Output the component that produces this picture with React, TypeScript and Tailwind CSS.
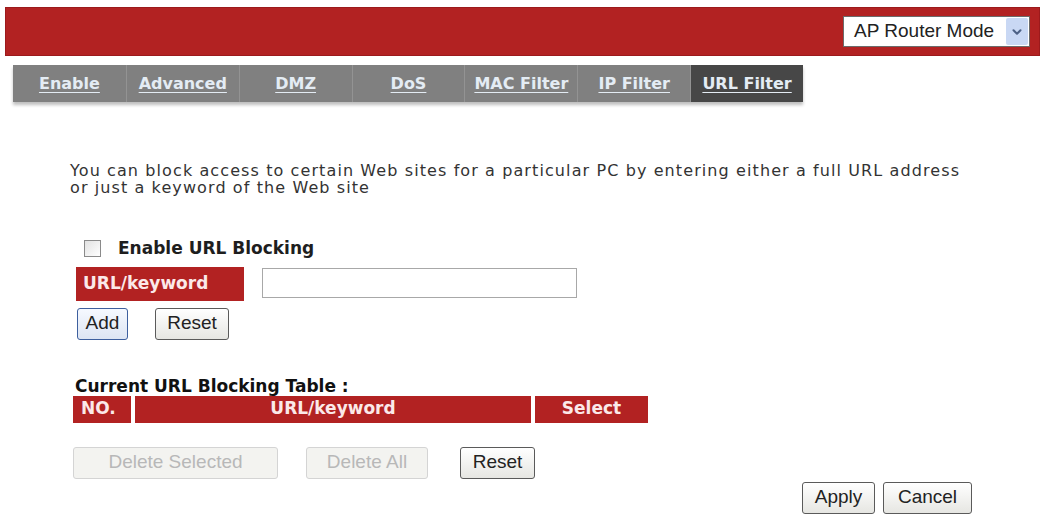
import { ChevronDown } from "lucide-react";

const TABS = ["Enable", "Advanced", "DMZ", "DoS", "MAC Filter", "IP Filter", "URL Filter"];

function Btn({
  label,
  className = "",
  disabled = false,
  focused = false,
}: {
  label: string;
  className?: string;
  disabled?: boolean;
  focused?: boolean;
}) {
  let look = "border-[#5a5a5a] bg-gradient-to-b from-white to-[#e6e6e2] text-[#222]";
  if (disabled) look = "border-[#d4d4d4] bg-[#f3f3f0] text-[#b8b8b8]";
  if (focused) look = "border-[#3d5f9e] bg-gradient-to-b from-[#f6f9ff] to-[#dde5f3] text-[#222]";
  return (
    <button
      type="button"
      disabled={disabled}
      className={
        "flex h-[32px] items-center justify-center rounded-[3px] border font-['Liberation_Sans',Arial,sans-serif] text-[19px] " +
        look +
        " " +
        className
      }
    >
      {label}
    </button>
  );
}

export default function App() {
  return (
    <div className="relative h-[518px] w-[1045px] overflow-hidden bg-white font-['DejaVu_Sans',Verdana,sans-serif] text-[#2b2b2b]">
      {/* top bar */}
      <div className="mx-[5px] mt-[7px] flex h-[49px] items-center justify-end border border-[#9c1a1c] bg-[#b22222] pr-[9px]">
        <div className="flex h-[31px] w-[187px] items-center border border-[#6b6b6b] bg-white pl-[10px] pr-[1px]">
          <span className="flex-1 font-['Liberation_Sans',Arial,sans-serif] text-[19px] text-[#222]">
            AP Router Mode
          </span>
          <span className="flex h-[27px] w-[22px] items-center justify-center rounded-[2px] bg-[#c9d8f4]">
            <ChevronDown className="h-[14px] w-[14px] text-[#4d6185]" strokeWidth={3.5} />
          </span>
        </div>
      </div>

      {/* tabs */}
      <div className="ml-[13px] mt-[9px] grid h-[37px] w-[790px] grid-cols-7 bg-[#808080] shadow-[0_3px_3px_rgba(0,0,0,0.25)]">
        {TABS.map((t, i) => (
          <div
            key={t}
            className={
              "flex items-center justify-center text-[16px] font-bold text-[#e4ecf4] underline underline-offset-[3px] " +
              (i === TABS.length - 1 ? "bg-[#474747]" : "") +
              (i > 0 ? " border-l border-[#939393]" : "")
            }
          >
            {t}
          </div>
        ))}
      </div>

      <p className="ml-[70px] mt-[60px] w-[970px] text-[16px] leading-[17px] tracking-[1.1px] text-[#333]">
        You can block access to certain Web sites for a particular PC by entering either a full URL address
        <br />
        or just a keyword of the Web site
      </p>

      <div className="ml-[84px] mt-[40px] flex items-center">
        <span className="h-[17px] w-[17px] border border-[#8a8a8a] bg-gradient-to-br from-[#e2e2e2] to-white" />
        <span className="ml-[17px] text-[17px] font-bold text-[#1e1e1e]">Enable URL Blocking</span>
      </div>

      <div className="ml-[76px] mt-[5px] flex items-start">
        <div className="flex h-[34px] w-[168px] items-center bg-[#b22222] pl-[7px] text-[17px] font-bold text-[#fbe9e9]">
          URL/keyword
        </div>
        <div className="ml-[18px] mt-[1px] h-[30px] w-[315px] border border-[#a8a8a8] bg-white" />
      </div>

      <div className="ml-[77px] mt-[7px] flex">
        <Btn label="Add" focused className="w-[51px]" />
        <Btn label="Reset" className="ml-[27px] w-[74px]" />
      </div>

      <div className="ml-[75px] mt-[36px] text-[17px] font-bold leading-[20px] text-[#111]">
        Current URL Blocking Table :
      </div>
      <div className="ml-[73px] flex h-[27px] w-[575px] gap-[4px] text-[17px] font-bold text-[#fbe9e9]">
        <div className="flex w-[58px] items-center bg-[#b22222] pl-[8px]">NO.</div>
        <div className="flex flex-1 items-center justify-center bg-[#b22222]">URL/keyword</div>
        <div className="flex w-[113px] items-center justify-center bg-[#b22222]">Select</div>
      </div>

      <div className="ml-[73px] mt-[24px] flex">
        <Btn label="Delete Selected" disabled className="w-[205px]" />
        <Btn label="Delete All" disabled className="ml-[28px] w-[122px]" />
        <Btn label="Reset" className="ml-[32px] w-[75px]" />
      </div>

      <div className="ml-[802px] mt-[3px] flex">
        <Btn label="Apply" className="w-[73px]" />
        <Btn label="Cancel" className="ml-[8px] w-[89px]" />
      </div>
    </div>
  );
}
